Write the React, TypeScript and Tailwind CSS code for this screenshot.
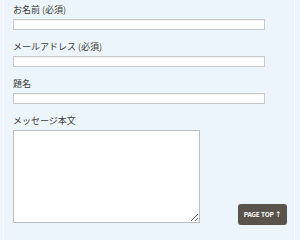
const fields = [
  { label: 'お名前 (必須)' },
  { label: 'メールアドレス (必須)' },
  { label: '題名' },
];

export default function App() {
  return (
    <div
      className="relative h-[240px] w-[300px] overflow-hidden bg-[#edf5fc] pl-[3px]"
      style={{ fontFamily: '"Noto Sans CJK JP", "Noto Sans", sans-serif' }}
    >
      <div className="h-full w-[292px] border-x border-[#f7fbff] pl-[9px] pt-[3px]">
        {fields.map((f) => (
          <div key={f.label} className="mb-[10px]">
            <label className="mb-[2px] block h-[14px] text-[9px] leading-[14px] text-[#3a3a3a]">
              {f.label}
            </label>
            <input
              type="text"
              className="block h-[11px] w-[252px] border border-[#c9c9c9] bg-white shadow-[inset_0_1px_1px_rgba(0,0,0,0.06)] outline-none"
            />
          </div>
        ))}
        <div>
          <label className="mb-[2px] block h-[14px] text-[9px] leading-[14px] text-[#3a3a3a]">
            メッセージ本文
          </label>
          <textarea className="block h-[93px] w-[187px] resize border border-[#bdbdbd] bg-white outline-none" />
        </div>
      </div>

      {/* Page top button */}
      <button className="absolute left-[238px] top-[204px] flex h-[21px] w-[49px] items-center justify-center rounded-[3px] bg-[#5a534b] text-[6.5px] font-bold tracking-tight text-white">
        PAGE TOP ↑
      </button>
    </div>
  );
}
